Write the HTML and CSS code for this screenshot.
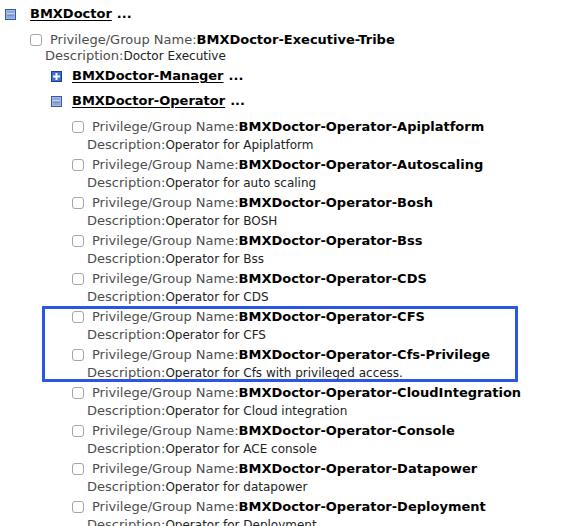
FILE: index.html
```html
<!DOCTYPE html>
<html>
<head>
<meta charset="utf-8">
<link rel="stylesheet" href="styles.css">
</head>
<body>
<div class="tree">
  <div class="node">
    <div class="node-head top-head">
      <svg class="toggle" width="11" height="11" viewBox="0 0 11 11"><rect x="0.5" y="0.5" width="10" height="10" fill="#b9c8e6" stroke="#3557b0"/><rect x="1.5" y="1.5" width="8" height="8" fill="#8ea6d8"/><rect x="2" y="4.5" width="7" height="2" fill="#fff"/><rect x="2" y="5.5" width="7" height="1" fill="#2f4f9a"/></svg>
      <a class="node-name">BMXDoctor</a><span class="more">...</span>
    </div>
    <div class="children top-children">
      <div class="item exec">
        <div class="priv"><span class="check"></span><span class="label">Privilege/Group Name:</span><b class="name">BMXDoctor-Executive-Tribe</b></div>
        <div class="desc"><span class="label">Description:</span><span class="val">Doctor Executive</span></div>
      </div>
      <div class="subnode">
        <div class="node-head sub-head">
          <svg class="toggle" width="11" height="11" viewBox="0 0 11 11"><rect x="0.5" y="0.5" width="10" height="10" fill="#3d71d6" stroke="#1f3f94"/><rect x="4.5" y="2" width="2" height="7" fill="#fff"/><rect x="2" y="4.5" width="7" height="2" fill="#fff"/></svg>
          <a class="node-name">BMXDoctor-Manager</a><span class="more">...</span>
        </div>
      </div>
      <div class="subnode">
        <div class="node-head sub-head">
          <svg class="toggle" width="11" height="11" viewBox="0 0 11 11"><rect x="0.5" y="0.5" width="10" height="10" fill="#b9c8e6" stroke="#3557b0"/><rect x="1.5" y="1.5" width="8" height="8" fill="#8ea6d8"/><rect x="2" y="4.5" width="7" height="2" fill="#fff"/><rect x="2" y="5.5" width="7" height="1" fill="#2f4f9a"/></svg>
          <a class="node-name">BMXDoctor-Operator</a><span class="more">...</span>
        </div>
        <div class="children sub-children">
          <div class="item">
            <div class="priv"><span class="check"></span><span class="label">Privilege/Group Name:</span><b class="name">BMXDoctor-Operator-Apiplatform</b></div>
            <div class="desc"><span class="label">Description:</span><span class="val">Operator for Apiplatform</span></div>
          </div>
          <div class="item">
            <div class="priv"><span class="check"></span><span class="label">Privilege/Group Name:</span><b class="name">BMXDoctor-Operator-Autoscaling</b></div>
            <div class="desc"><span class="label">Description:</span><span class="val">Operator for auto scaling</span></div>
          </div>
          <div class="item">
            <div class="priv"><span class="check"></span><span class="label">Privilege/Group Name:</span><b class="name">BMXDoctor-Operator-Bosh</b></div>
            <div class="desc"><span class="label">Description:</span><span class="val">Operator for BOSH</span></div>
          </div>
          <div class="item">
            <div class="priv"><span class="check"></span><span class="label">Privilege/Group Name:</span><b class="name">BMXDoctor-Operator-Bss</b></div>
            <div class="desc"><span class="label">Description:</span><span class="val">Operator for Bss</span></div>
          </div>
          <div class="item">
            <div class="priv"><span class="check"></span><span class="label">Privilege/Group Name:</span><b class="name">BMXDoctor-Operator-CDS</b></div>
            <div class="desc"><span class="label">Description:</span><span class="val">Operator for CDS</span></div>
          </div>
          <div class="highlight">
            <div class="item">
              <div class="priv"><span class="check"></span><span class="label">Privilege/Group Name:</span><b class="name">BMXDoctor-Operator-CFS</b></div>
              <div class="desc"><span class="label">Description:</span><span class="val">Operator for CFS</span></div>
            </div>
            <div class="item">
              <div class="priv"><span class="check"></span><span class="label">Privilege/Group Name:</span><b class="name">BMXDoctor-Operator-Cfs-Privilege</b></div>
              <div class="desc"><span class="label">Description:</span><span class="val">Operator for Cfs with privileged access.</span></div>
            </div>
          </div>
          <div class="item">
            <div class="priv"><span class="check"></span><span class="label">Privilege/Group Name:</span><b class="name">BMXDoctor-Operator-CloudIntegration</b></div>
            <div class="desc"><span class="label">Description:</span><span class="val">Operator for Cloud integration</span></div>
          </div>
          <div class="item">
            <div class="priv"><span class="check"></span><span class="label">Privilege/Group Name:</span><b class="name">BMXDoctor-Operator-Console</b></div>
            <div class="desc"><span class="label">Description:</span><span class="val">Operator for ACE console</span></div>
          </div>
          <div class="item">
            <div class="priv"><span class="check"></span><span class="label">Privilege/Group Name:</span><b class="name">BMXDoctor-Operator-Datapower</b></div>
            <div class="desc"><span class="label">Description:</span><span class="val">Operator for datapower</span></div>
          </div>
          <div class="item">
            <div class="priv"><span class="check"></span><span class="label">Privilege/Group Name:</span><b class="name">BMXDoctor-Operator-Deployment</b></div>
            <div class="desc"><span class="label">Description:</span><span class="val">Operator for Deployment</span></div>
          </div>
        </div>
      </div>
    </div>
  </div>
</div>
</body>
</html>
```
FILE: styles.css
```css
html, body {
  margin: 0;
  padding: 0;
  background: #fff;
}
body {
  font-family: "DejaVu Sans", Verdana, sans-serif;
  font-size: 13px;
  color: #111;
  overflow: hidden;
  height: 526px;
}
.tree {
  padding-left: 5px;
}
.node-head {
  display: flex;
  align-items: center;
  white-space: nowrap;
  height: 18px;
  line-height: 18px;
}
.top-head {
  padding: 5px 0 4px;
}
.toggle {
  flex: none;
  display: block;
}
.top-head .toggle {
  margin-right: 14px;
}
.sub-head {
  padding: 4px 0 3px;
}
.sub-head .toggle {
  margin-right: 10px;
}
.node-name {
  font-weight: bold;
  font-size: 13px;
  color: #000;
  text-decoration: underline;
  text-underline-offset: 2px;
}
.more {
  font-weight: bold;
  font-size: 13px;
  color: #000;
  margin-left: 5px;
}
.top-children {
  padding-left: 25px;
}
.subnode {
  padding-left: 21px;
}
.sub-children {
  padding-left: 21px;
  padding-top: 1px;
}
.item {
  white-space: nowrap;
}
.priv {
  display: flex;
  align-items: center;
  height: 18px;
  line-height: 18px;
  padding-top: 4px;
}
.check {
  flex: none;
  width: 10px;
  height: 10px;
  border: 1px solid #a6a6a6;
  border-radius: 3px;
  background: #fff;
  margin-right: 8px;
}
.label {
  color: #4d4d4d;
  font-size: 13px;
}
.name {
  font-weight: bold;
  font-size: 13px;
  color: #000;
}
.desc {
  padding-left: 15px;
  height: 16px;
  line-height: 18px;
}
.exec .desc {
  height: 14px;
  line-height: 13px;
}
.val {
  font-size: 12px;
  color: #222;
}
.highlight {
  position: relative;
}
.highlight::after {
  content: "";
  position: absolute;
  left: -30px;
  width: 476px;
  top: 2px;
  bottom: -2px;
  box-sizing: border-box;
  border: 3px solid #2b55e6;
  pointer-events: none;
}
```
